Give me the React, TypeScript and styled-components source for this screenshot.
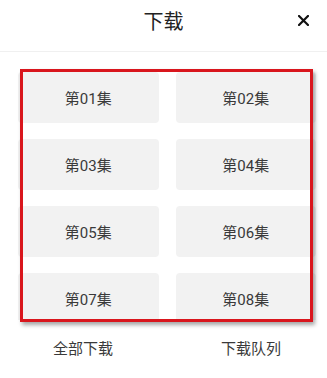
import styled, { createGlobalStyle } from "styled-components";

const GlobalStyle = createGlobalStyle`
  body {
    margin: 0;
    background: #fff;
    font-family: Roboto, "Noto Sans CJK SC", sans-serif;
  }
`;

const episodes = ["01", "02", "03", "04", "05", "06", "07", "08"];

export default function App() {
  return (
    <Page>
      <GlobalStyle />
      <Header>
        <Title>下载</Title>
        <Close aria-label="close">
          <svg width="11" height="11" viewBox="0 0 11 11">
            <path
              d="M1 1 L10 10 M10 1 L1 10"
              stroke="#111"
              strokeWidth="2.2"
              strokeLinecap="square"
            />
          </svg>
        </Close>
      </Header>
      <List>
        {episodes.map((n) => (
          <Episode key={n}>第{n}集</Episode>
        ))}
      </List>
      <Footer>
        <FooterButton>全部下载</FooterButton>
        <FooterButton>下载队列</FooterButton>
      </Footer>
      <Highlight />
    </Page>
  );
}

const Page = styled.div`
  position: relative;
  width: 327px;
  height: 378px;
  overflow: hidden;
  background: #fff;
`;

const Header = styled.header`
  position: relative;
  height: 51px;
  border-bottom: 1px solid #f0f0f0;
  display: flex;
  justify-content: center;
`;

const Title = styled.h1`
  margin: 0;
  font-size: 20px;
  font-weight: 400;
  line-height: 45px;
  color: #222;
`;

const Close = styled.button`
  position: absolute;
  right: 17px;
  top: 14px;
  width: 13px;
  height: 13px;
  padding: 0;
  border: 0;
  background: none;
  display: flex;
  align-items: center;
  justify-content: center;
`;

const List = styled.div`
  height: 248px;
  padding: 20px 11px 0 18px;
  overflow: hidden;
  display: grid;
  grid-template-columns: 1fr 1fr;
  grid-auto-rows: 51px;
  column-gap: 17px;
  row-gap: 16px;
`;

const Episode = styled.div`
  background: #f2f2f2;
  border-radius: 4px;
  display: flex;
  align-items: center;
  justify-content: center;
  font-size: 15px;
  color: #3a3a3a;
`;

const Footer = styled.footer`
  height: 58px;
  padding: 0 46px 0 53px;
  display: flex;
  align-items: center;
  justify-content: space-between;
`;

const FooterButton = styled.span`
  font-size: 15px;
  color: #3a3a3a;
  line-height: 20px;
`;

const Highlight = styled.div`
  position: absolute;
  left: 20px;
  top: 69px;
  width: 287px;
  height: 247px;
  border: 3px solid #d9161d;
  box-shadow: 2px 3px 4px rgba(0, 0, 0, 0.35);
  pointer-events: none;
`;
